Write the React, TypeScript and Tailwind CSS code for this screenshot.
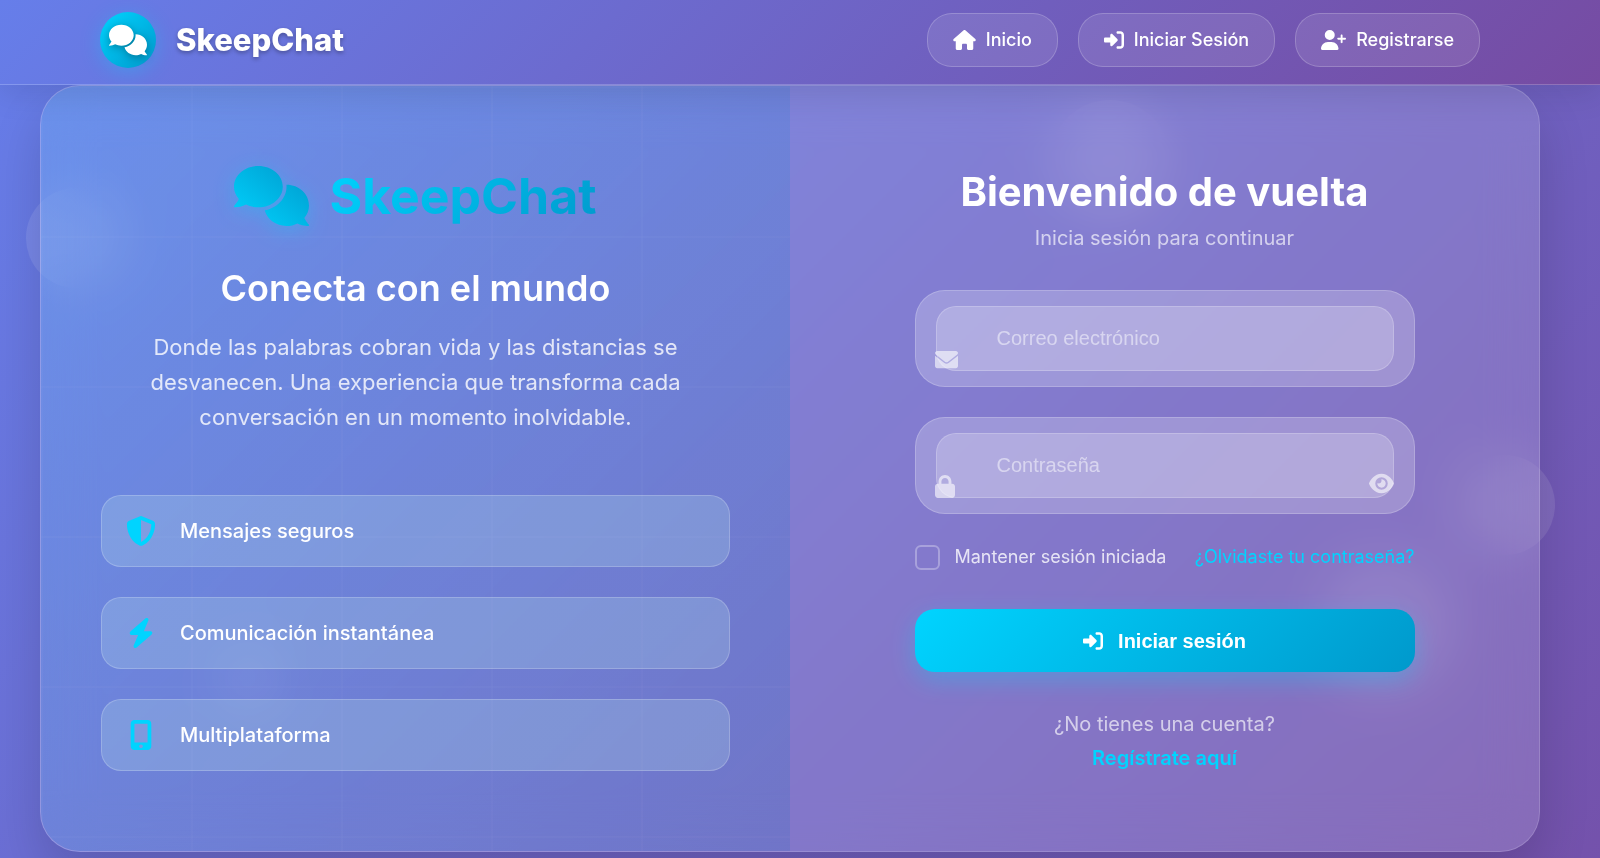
import { useState } from "react";
import { FaBolt, FaEye, FaHouse, FaLock, FaRightToBracket, FaShieldHalved, FaUserPlus } from "react-icons/fa6";

type IconType = React.ComponentType<{ className?: string }>;

const navLinks: { label: string; icon: IconType; size: string }[] = [
  { label: "Inicio", icon: FaHouse, size: "h-5 w-[23px]" },
  { label: "Iniciar Sesión", icon: FaRightToBracket, size: "h-5 w-5" },
  { label: "Registrarse", icon: FaUserPlus, size: "h-5 w-[25px]" },
];

const features: { label: string; icon: IconType }[] = [
  { label: "Mensajes seguros", icon: FaShieldHalved },
  { label: "Comunicación instantánea", icon: FaBolt },
  { label: "Multiplataforma", icon: MobileIcon },
];

export default function App() {
  return (
    <div className="relative min-h-screen overflow-hidden bg-[linear-gradient(135deg,#667eea_0%,#764ba2_115%)] font-['Inter',sans-serif] text-white">
      <FloatingShapes />
      <Header />
      <main className="pl-10 pr-15 pb-1.5">
        <div className="relative grid grid-cols-2 overflow-hidden rounded-[40px] border border-white/20 bg-white/10 shadow-[0_25px_50px_rgba(0,0,0,0.15)] backdrop-blur-[26px]">
          <BrandPanel />
          <LoginPanel />
        </div>
      </main>
    </div>
  );
}

function FloatingShapes() {
  return (
    <div className="pointer-events-none absolute inset-0" aria-hidden="true">
      <span className="absolute left-[26px] top-[188px] size-[100px] rounded-full bg-white/10" />
      <span className="absolute left-[220px] top-[650px] size-[60px] rounded-full bg-white/10" />
      <span className="absolute left-[1050px] top-[100px] size-[120px] rounded-full bg-white/10" />
      <span className="absolute left-[1455px] top-[455px] size-[100px] rounded-full bg-white/10" />
      <span className="absolute left-[1315px] top-[555px] size-[140px] rounded-full bg-white/10" />
    </div>
  );
}

function Header() {
  return (
    <header className="relative z-10 border-b border-white/20 bg-[linear-gradient(135deg,#667eea_0%,#764ba2_100%)] shadow-[0_8px_32px_rgba(0,0,0,0.1)]">
      <div className="flex h-[84px] items-center justify-between pl-25 pr-30 pb-1">
        <a href="#inicio" className="flex items-center gap-5">
          <span className="flex size-14 items-center justify-center rounded-full bg-[linear-gradient(135deg,#00d4ff_0%,#0099cc_100%)] shadow-[0_4px_20px_rgba(0,212,255,0.3)]">
            <CommentsIcon className="size-[38px] fill-current drop-shadow-[0_2px_4px_rgba(0,0,0,0.3)]" />
          </span>
          <span className="text-[31px] font-extrabold [text-shadow:0_2px_4px_rgba(0,0,0,0.3)]">SkeepChat</span>
        </a>
        <nav className="flex gap-5">
          {navLinks.map(({ label, icon: Icon, size }) => (
            <a
              key={label}
              href="#"
              className="flex h-[54px] items-center gap-2.5 rounded-[25px] border border-white/20 bg-white/10 px-[25px] text-lg font-medium"
            >
              <Icon className={size} />
              {label}
            </a>
          ))}
        </nav>
      </div>
    </header>
  );
}

function BrandPanel() {
  return (
    <section className="relative bg-[linear-gradient(135deg,rgba(0,212,255,0.1)_0%,rgba(0,153,204,0.1)_100%)] px-15 pt-[74px] pb-20">
      <div className="pointer-events-none absolute inset-0 bg-[linear-gradient(to_right,transparent_148px,rgba(255,255,255,0.02)_148px),linear-gradient(to_bottom,transparent_148px,rgba(255,255,255,0.02)_148px)] bg-size-[150px_150px] bg-position-[2px_2px]" />
      <svg className="absolute size-0" aria-hidden="true">
        <linearGradient id="brand" x1="0" y1="1" x2="1" y2="0">
          <stop offset="0" stopColor="#00d4ff" />
          <stop offset="1" stopColor="#0099cc" />
        </linearGradient>
      </svg>
      <div className="relative flex items-center justify-center gap-5">
        <CommentsIcon className="h-[60px] w-[75px] fill-[url(#brand)] drop-shadow-[0_4px_10px_rgba(0,212,255,0.3)]" />
        <span className="bg-[linear-gradient(135deg,#00d4ff_0%,#0099cc_100%)] bg-clip-text text-[50px] leading-[72px] font-bold text-transparent">
          SkeepChat
        </span>
      </div>
      <div className="relative mt-8 text-center">
        <h1 className="text-4xl leading-12 font-semibold">Conecta con el mundo</h1>
        <p className="mx-auto mt-[18px] max-w-[560px] text-[22px] leading-[35px] text-white/80">
          Donde las palabras cobran vida y las distancias se desvanecen. Una experiencia que transforma cada conversación
          en un momento inolvidable.
        </p>
      </div>
      <ul className="relative mt-[60px] flex flex-col gap-[30px]">
        {features.map(({ label, icon: Icon }) => (
          <li
            key={label}
            className="flex h-[72px] items-center gap-6 rounded-[20px] border border-white/20 bg-[rgba(190,238,235,0.22)] px-6 text-xl font-medium"
          >
            <Icon className="size-[30px] text-[#00d4ff]" />
            {label}
          </li>
        ))}
      </ul>
    </section>
  );
}

function LoginPanel() {
  const [showPassword, setShowPassword] = useState(false);

  return (
    <section className="bg-white/5 pt-[81px] pb-15">
      <div className="mx-auto max-w-[500px]">
        <div className="text-center">
          <h2 className="text-[40px] leading-[50px] font-bold">Bienvenido de vuelta</h2>
          <p className="mt-[5px] text-xl leading-8 text-white/65">Inicia sesión para continuar</p>
        </div>
        <form className="mt-9" onSubmit={(e) => e.preventDefault()}>
          <Field
            icon={EnvelopeIcon}
            iconSize="size-[23px]"
            id="email"
            type="email"
            placeholder="Correo electrónico"
          />
          <Field
            icon={FaLock}
            iconSize="h-[23px] w-5"
            id="password"
            type={showPassword ? "text" : "password"}
            placeholder="Contraseña"
            onToggle={() => setShowPassword(!showPassword)}
          />
          <div className="flex h-[26px] items-center justify-between text-lg">
            <label className="flex items-center gap-[15px] text-white/80">
              <input
                type="checkbox"
                className="size-[25px] appearance-none rounded-md border-2 border-white/30 checked:bg-[#00d4ff]"
              />
              Mantener sesión iniciada
            </label>
            <a href="#recuperar" className="text-[#00d4ff]">
              ¿Olvidaste tu contraseña?
            </a>
          </div>
          <button
            type="submit"
            className="mt-[39px] flex h-[63px] w-full items-center justify-center gap-[15px] rounded-[20px] bg-[linear-gradient(135deg,#00d4ff_0%,#0099cc_100%)] font-['Liberation_Sans',sans-serif] text-xl font-bold shadow-[0_8px_25px_rgba(0,212,255,0.3)]"
          >
            <FaRightToBracket />
            Iniciar sesión
          </button>
        </form>
        <p className="mt-[35px] text-center text-xl leading-[34px] text-white/65">
          ¿No tienes una cuenta?
          <a href="#registro" className="block font-semibold text-[#00d4ff]">
            Regístrate aquí
          </a>
        </p>
      </div>
    </section>
  );
}

function Field({
  icon: Icon,
  iconSize,
  id,
  type,
  placeholder,
  onToggle,
}: {
  icon: IconType;
  iconSize: string;
  id: string;
  type: string;
  placeholder: string;
  onToggle?: () => void;
}) {
  return (
    <div className="relative mb-[30px] rounded-[30px] border border-white/20 bg-white/22 px-5 py-[15px]">
      <input
        id={id}
        type={type}
        placeholder={placeholder}
        className="block h-[65px] w-full rounded-[20px] border border-white/20 bg-white/20 px-[60px] font-['Liberation_Sans',sans-serif] text-xl outline-none placeholder:text-white/50"
      />
      <label htmlFor={id} aria-label={placeholder} className="absolute bottom-[15px] left-[19px] text-white/60">
        <Icon className={iconSize} />
      </label>
      {onToggle && (
        <button
          type="button"
          aria-label="Mostrar contraseña"
          onClick={onToggle}
          className="absolute right-5 bottom-[17px] text-[25px] text-white/60"
        >
          <FaEye />
        </button>
      )}
    </div>
  );
}

function CommentsIcon({ className }: { className?: string }) {
  return (
    <svg viewBox="0 0 640 512" className={className} aria-hidden="true">
      <path d="M416 176C416 78.8 322.9 0 208 0S0 78.8 0 176c0 39.57 15.62 75.96 41.67 105.4c-16.39 32.76-39.23 57.32-39.59 57.68c-2.1 2.205-2.67 5.475-1.441 8.354C1.9 350.3 4.602 352 7.66 352c38.35 0 70.76-11.12 95.74-24.04C134.2 343.1 169.8 352 208 352C322.9 352 416 273.2 416 176zM599.6 443.7C624.8 413.9 640 376.6 640 336C640 238.8 554 160 448 160c-.3145 0-.6191 .041-.9336 .043C447.5 165.3 448 170.6 448 176c0 98.62-79.68 181.2-186.1 202.5C282.7 455.1 357.1 512 448 512c33.69 0 65.32-8.008 92.85-21.98C565.2 502 596.1 512 632.3 512c3.059 0 5.76-1.725 7.02-4.605c1.229-2.879 .6582-6.148-1.441-8.354C637.6 498.7 615.9 475.3 599.6 443.7z" />
    </svg>
  );
}

function EnvelopeIcon({ className }: { className?: string }) {
  return (
    <svg viewBox="0 0 512 512" fill="currentColor" className={className} aria-hidden="true">
      <path d="M256 352c-16.53 0-33.06-5.422-47.16-16.41L0 173.2V400C0 426.5 21.49 448 48 448h416c26.51 0 48-21.49 48-48V173.2l-208.8 162.5C289.1 346.6 272.5 352 256 352zM16.29 145.3l212.2 165.1c16.19 12.6 38.87 12.6 55.06 0l212.2-165.1C505.1 137.3 512 125 512 112C512 85.49 490.5 64 464 64h-416C21.49 64 0 85.49 0 112C0 125 6.01 137.3 16.29 145.3z" />
    </svg>
  );
}

function MobileIcon({ className }: { className?: string }) {
  return (
    <svg viewBox="0 0 384 512" fill="currentColor" className={className} aria-hidden="true">
      <path d="M304 0h-224c-35.35 0-64 28.65-64 64v384c0 35.35 28.65 64 64 64h224c35.35 0 64-28.65 64-64V64C368 28.65 339.3 0 304 0zM192 480c-17.75 0-32-14.25-32-32s14.25-32 32-32s32 14.25 32 32S209.8 480 192 480zM304 64v320h-224V64H304z" />
    </svg>
  );
}
